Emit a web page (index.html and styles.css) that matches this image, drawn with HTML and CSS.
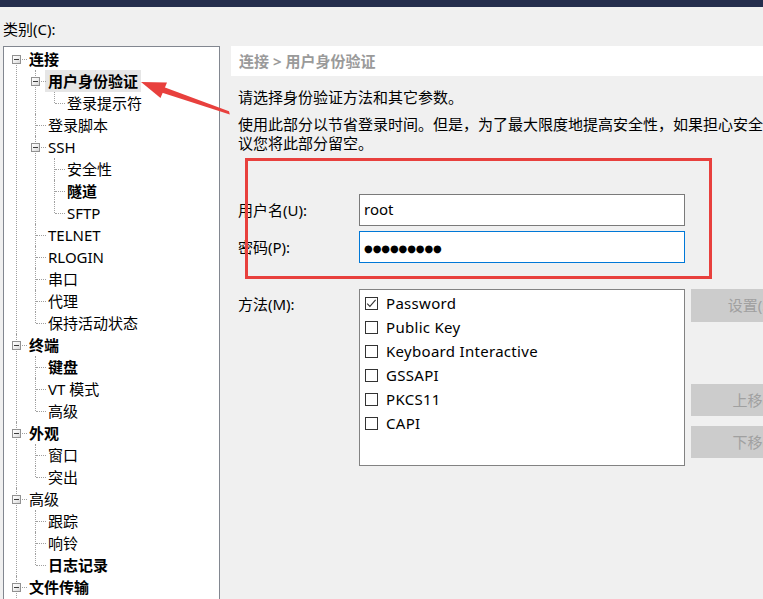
FILE: index.html
```html
<!DOCTYPE html>
<html lang="zh-CN">
<head>
<meta charset="utf-8">
<title>会话选项</title>
<link rel="stylesheet" href="styles.css">
</head>
<body>
<div class="titlebar"></div>
<div class="cat-label">类别(C):</div>
<div class="panes">
  <div class="tree-box">
    <ul class="tree">
      <li class="first">
        <div class="row"><span class="exp"></span><span class="label b">连接</span></div>
        <ul>
          <li>
            <div class="row"><span class="exp"></span><span class="label b sel">用户身份验证</span></div>
            <ul>
              <li class="last"><div class="row leaf"><span class="label">登录提示符</span></div></li>
            </ul>
          </li>
          <li><div class="row leaf"><span class="label">登录脚本</span></div></li>
          <li>
            <div class="row"><span class="exp"></span><span class="label">SSH</span></div>
            <ul>
              <li><div class="row leaf"><span class="label">安全性</span></div></li>
              <li><div class="row leaf"><span class="label b">隧道</span></div></li>
              <li class="last"><div class="row leaf"><span class="label">SFTP</span></div></li>
            </ul>
          </li>
          <li><div class="row leaf"><span class="label">TELNET</span></div></li>
          <li><div class="row leaf"><span class="label">RLOGIN</span></div></li>
          <li><div class="row leaf"><span class="label">串口</span></div></li>
          <li><div class="row leaf"><span class="label">代理</span></div></li>
          <li class="last"><div class="row leaf"><span class="label">保持活动状态</span></div></li>
        </ul>
      </li>
      <li>
        <div class="row"><span class="exp"></span><span class="label b">终端</span></div>
        <ul>
          <li><div class="row leaf"><span class="label b">键盘</span></div></li>
          <li><div class="row leaf"><span class="label">VT 模式</span></div></li>
          <li class="last"><div class="row leaf"><span class="label">高级</span></div></li>
        </ul>
      </li>
      <li>
        <div class="row"><span class="exp"></span><span class="label b">外观</span></div>
        <ul>
          <li><div class="row leaf"><span class="label">窗口</span></div></li>
          <li class="last"><div class="row leaf"><span class="label">突出</span></div></li>
        </ul>
      </li>
      <li>
        <div class="row"><span class="exp"></span><span class="label">高级</span></div>
        <ul>
          <li><div class="row leaf"><span class="label">跟踪</span></div></li>
          <li><div class="row leaf"><span class="label">响铃</span></div></li>
          <li class="last"><div class="row leaf"><span class="label b">日志记录</span></div></li>
        </ul>
      </li>
      <li>
        <div class="row"><span class="exp"></span><span class="label b">文件传输</span></div>
      </li>
    </ul>
  </div>

  <div class="content">
    <div class="crumb">连接 &gt; 用户身份验证</div>
    <div class="body">
      <p class="intro">请选择身份验证方法和其它参数。</p>
      <p class="note">使用此部分以节省登录时间。但是，为了最大限度地提高安全性，如果担心安全性，建<br>议您将此部分留空。</p>

      <div class="form-row first-row">
        <span class="flabel">用户名(U):</span>
        <div class="input">root</div>
      </div>
      <div class="form-row pw-row">
        <span class="flabel">密码(P):</span>
        <div class="input focus"><span class="dots">●●●●●●●●●</span></div>
      </div>
      <div class="method-row">
        <span class="flabel mlabel">方法(M):</span>
        <div class="listbox">
          <div class="item"><span class="cb"><svg width="13" height="13" viewBox="0 0 13 13"><polyline points="2.2,6.6 4.9,9.4 10.6,2.9" fill="none" stroke="#333" stroke-width="1.1"/></svg></span><span>Password</span></div>
          <div class="item"><span class="cb"></span><span>Public Key</span></div>
          <div class="item"><span class="cb"></span><span>Keyboard Interactive</span></div>
          <div class="item"><span class="cb"></span><span>GSSAPI</span></div>
          <div class="item"><span class="cb"></span><span>PKCS11</span></div>
          <div class="item"><span class="cb"></span><span>CAPI</span></div>
        </div>
        <div class="buttons">
          <div class="btn">设置(S)...</div>
          <div class="btn up">上移(U)</div>
          <div class="btn down">下移(D)</div>
        </div>
      </div>
    </div>
  </div>
</div>

<div class="redbox"></div>
<svg class="arrow" width="763" height="599" viewBox="0 0 763 599">
  <polygon points="229,111.3 229.8,114.5 161.5,92.5 163,86.8" fill="#e8403d"/>
  <polygon points="141,82 167,82.5 160.5,98" fill="#e8403d"/>
</svg>
</body>
</html>
```

FILE: styles.css
```css
html, body {
  margin: 0;
  padding: 0;
}

body {
  width: 763px;
  height: 599px;
  overflow: hidden;
  position: relative;
  background: #f0f0f0;
  font-family: "Noto Sans", "Noto Sans CJK SC", sans-serif;
  font-size: 15px;
  color: #000;
}

.titlebar {
  height: 7px;
  background: #252e4d;
}

.cat-label {
  padding: 12px 0 7px 3px;
  line-height: 20px;
  height: 20px;
}

.panes {
  display: flex;
  gap: 11px;
  padding-left: 3px;
  height: 553px;
  overflow: hidden;
}

/* ---------- tree ---------- */
.tree-box {
  flex: 0 0 217px;
  box-sizing: border-box;
  height: 560px;
  background: #fff;
  border: 1px solid #828790;
  padding-top: 1px;
  overflow: hidden;
}

.tree, .tree ul {
  list-style: none;
  margin: 0;
  padding: 0;
}

.tree ul {
  padding-left: 19px;
}

.tree li {
  position: relative;
}

.tree li::before {
  content: "";
  position: absolute;
  left: 12px;
  top: 0;
  bottom: 0;
  border-left: 1px dotted #a0a0a0;
}

.tree li.first::before {
  top: 11px;
}

.tree li.last::before {
  bottom: auto;
  height: 11px;
}

.row {
  position: relative;
  height: 22px;
  line-height: 22px;
  padding-left: 25px;
  white-space: nowrap;
}

.row::before {
  content: "";
  position: absolute;
  left: 13px;
  top: 11px;
  width: 10px;
  border-top: 1px dotted #a0a0a0;
}

.exp {
  position: absolute;
  left: 8px;
  top: 7px;
  width: 9px;
  height: 9px;
  box-sizing: border-box;
  border: 1px solid #919191;
  background: linear-gradient(135deg, #ffffff 0%, #f0f0f0 50%, #d6d6d6 100%);
  z-index: 1;
}

.exp::after {
  content: "";
  position: absolute;
  left: 1px;
  top: 3px;
  width: 5px;
  height: 1px;
  background: #3c3c3c;
}

.label {
  display: inline-block;
}

.label.b {
  font-weight: bold;
}

.label.sel {
  background: #e6e6e6;
  padding: 0 3px;
  margin-left: -3px;
}

/* ---------- content ---------- */
.content {
  flex: 1;
  min-width: 0;
}

.crumb {
  height: 30px;
  line-height: 30px;
  background: #fff;
  padding-left: 8px;
  font-weight: bold;
  color: #9a9a9a;
  white-space: nowrap;
}

.body {
  padding-left: 7px;
}

.intro {
  margin: 11px 0 0;
  line-height: 20px;
  white-space: nowrap;
}

.note {
  margin: 8px 0 0;
  line-height: 19px;
  white-space: nowrap;
}

.form-row {
  display: flex;
  align-items: center;
}

.first-row {
  margin-top: 41px;
}

.pw-row {
  margin-top: 5px;
}

.flabel {
  flex: 0 0 121px;
  line-height: 20px;
  white-space: nowrap;
}

.input {
  flex: 0 0 auto;
  box-sizing: border-box;
  width: 326px;
  height: 32px;
  border: 1px solid #7a7a7a;
  background: #fff;
  padding-left: 4px;
  line-height: 28px;
}

.input.focus {
  border-color: #0078d7;
}

.dots {
  font-family: "DejaVu Sans", sans-serif;
  font-size: 10px;
  letter-spacing: -0.1px;
  position: relative;
  top: 0;
}

.method-row {
  display: flex;
  align-items: flex-start;
  margin-top: 26px;
}

.mlabel {
  margin-top: 5px;
}

.listbox {
  flex: 0 0 auto;
  box-sizing: border-box;
  width: 326px;
  height: 177px;
  border: 1px solid #828282;
  background: #fff;
  padding: 1px 0 0 5px;
}

.item {
  display: flex;
  align-items: center;
  height: 24px;
  line-height: 24px;
  white-space: nowrap;
  letter-spacing: 0.3px;
}

.cb {
  box-sizing: border-box;
  flex: 0 0 13px;
  width: 13px;
  height: 13px;
  border: 1px solid #333;
  margin-right: 8px;
  background: #fff;
  display: flex;
}

.cb svg {
  margin: -1px;
}

.buttons {
  flex: 0 0 auto;
  margin-left: 6px;
  display: flex;
  flex-direction: column;
}

.btn {
  box-sizing: border-box;
  width: 133px;
  height: 33px;
  line-height: 31px;
  text-align: center;
  background: #cccccc;
  border: 1px solid #cccccc;
  color: #a0a0a0;
  white-space: nowrap;
}

.btn.up {
  margin-top: 62px;
  height: 32px;
  line-height: 30px;
}

.btn.down {
  margin-top: 10px;
  height: 32px;
  line-height: 30px;
}

/* ---------- annotations ---------- */
.redbox {
  position: absolute;
  left: 245px;
  top: 158px;
  width: 467px;
  height: 121px;
  box-sizing: border-box;
  border: 3px solid #e8403d;
}

.arrow {
  position: absolute;
  left: 0;
  top: 0;
  pointer-events: none;
}
```
